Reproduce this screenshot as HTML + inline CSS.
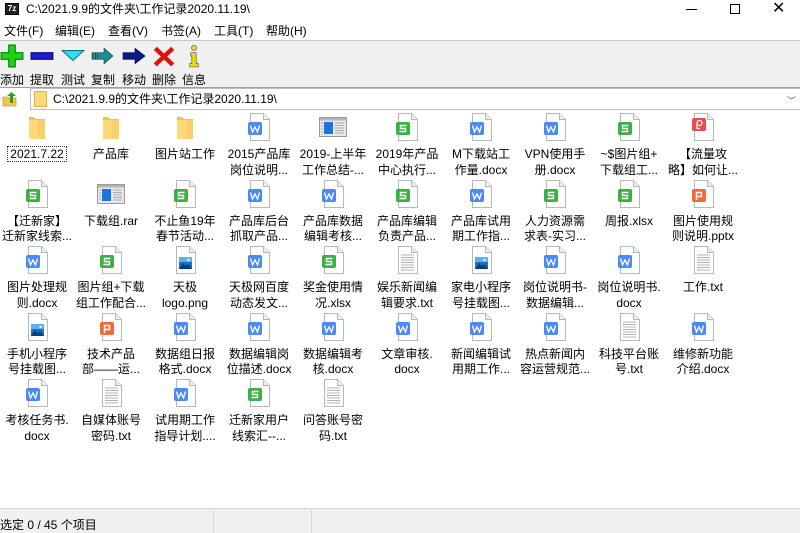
<!DOCTYPE html>
<html><head><meta charset="utf-8"><style>
*{margin:0;padding:0;box-sizing:border-box}
body{width:800px;height:533px;overflow:hidden;background:#fff;font-family:"Liberation Sans","Noto Sans CJK SC",sans-serif;font-size:12px;color:#000;position:relative}
.abs{position:absolute;white-space:nowrap}
.cell{position:absolute;width:74px;text-align:center}
.cell svg{display:block;margin:0 auto}
.cell .t{margin-top:6px;line-height:15.5px;white-space:nowrap;font-size:12px}
.tb{position:absolute;top:44px;width:36px;text-align:center}
.tb svg{display:block;margin:0 auto}
.tb span{display:block;font-size:12px;margin-top:3px;white-space:nowrap}
.menu span{position:absolute;white-space:nowrap}
</style></head><body>
<svg width="0" height="0" style="position:absolute">
<defs>
<symbol id="doc" viewBox="0 0 24 28"><path d="M3.5 .5H16.5L22.5 6.5V27.5H3.5Z" fill="#fff" stroke="#b8b8b8"/><path d="M16.5 .5V6.5H22.5" fill="#eee" stroke="#b8b8b8"/></symbol>
<symbol id="w" viewBox="0 0 24 28"><use href="#doc"/><rect x="1" y="9" width="14" height="13" rx="2" fill="#4a8af4"/><path d="M3.5 12.5L5.5 19L8 14L10.5 19L12.5 12.5" fill="none" stroke="#fff" stroke-width="1.3"/></symbol>
<symbol id="s" viewBox="0 0 24 28"><use href="#doc"/><rect x="1" y="9" width="14" height="13" rx="2" fill="#3db043"/><path d="M11.5 12.5H5.5V15.5H10.5V18.5H4.5" fill="none" stroke="#fff" stroke-width="1.4"/></symbol>
<symbol id="p" viewBox="0 0 24 28"><use href="#doc"/><rect x="1" y="9" width="14" height="13" rx="2" fill="#f36a3a"/><path d="M5.5 20V12.5H10.5V16.5H5.5" fill="none" stroke="#fff" stroke-width="1.4"/></symbol>
<symbol id="pr" viewBox="0 0 24 28"><use href="#doc"/><rect x="1" y="5" width="14" height="13" rx="2" fill="#e84c4c"/><circle cx="8.5" cy="10" r="2.5" fill="none" stroke="#fff" stroke-width="1.2"/><path d="M6 10V15.5H9" fill="none" stroke="#fff" stroke-width="1.2"/></symbol>
<symbol id="txt" viewBox="0 0 24 28"><use href="#doc"/><path d="M6 9H19M6 11.5H19M6 14H19M6 16.5H19M6 19H19M6 21.5H19M6 24H19" stroke="#9a9a9a" stroke-width=".8"/></symbol>
<symbol id="img" viewBox="0 0 24 28"><use href="#doc"/><rect x="6" y="11" width="13" height="12" fill="#1f6fc1"/><rect x="6" y="11" width="13" height="5" fill="#5bb0ee"/><path d="M6 23L10 17L13 20L15 18L19 23Z" fill="#0a3e7a"/><circle cx="15.5" cy="14" r="1.2" fill="#fff"/></symbol>
<symbol id="rar" viewBox="0 0 30 28"><rect x="1.5" y="4.5" width="27" height="19" fill="#e8e8e8" stroke="#9a9a9a"/><rect x="2" y="5" width="26" height="2.5" fill="#b5b5b5"/><rect x="6" y="9" width="9" height="12" fill="#1677e0"/><path d="M17 10H26M17 12.5H26M17 15H26M17 17.5H26M17 20H26M3 10H5M3 13H5M3 16H5M3 19H5" stroke="#999" stroke-width=".8"/></symbol>
<symbol id="fold" viewBox="0 0 24 28"><path d="M4 4H9L11 6H20V26H4Z" fill="#e9c25a"/><path d="M4 7H20V26H4Z" fill="#ffd978"/><path d="M13 7H20V26H13Z" fill="#f8cf68"/></symbol>
</defs></svg>

<div class="abs" style="left:5px;top:3px;width:14px;height:12px;background:#222;border:1px solid #000"><div style="color:#fff;font-size:8px;line-height:10px;font-weight:bold;text-align:center">7z</div></div>
<div class="abs" style="left:26px;top:1px;font-size:12px;line-height:16px">C:\2021.9.9的文件夹\工作记录2020.11.19\</div>
<div class="abs" style="left:686px;top:9px;width:11px;height:1px;background:#000"></div>
<div class="abs" style="left:730px;top:4px;width:10px;height:10px;border:1px solid #000"></div>
<div class="abs" style="left:772px;top:0;font-size:16px;line-height:18px;font-weight:200">✕</div>
<div class="abs menu" style="left:4px;top:23px;line-height:16px">
<span style="left:0">文件(F)</span><span style="left:51px">编辑(E)</span><span style="left:104px">查看(V)</span><span style="left:157px">书签(A)</span><span style="left:210px">工具(T)</span><span style="left:262px">帮助(H)</span></div>
<div class="abs" style="left:0;top:40px;width:800px;height:48px;background:#f0f0f0;border-top:1px solid #c8c8c8;border-bottom:1px solid #a0a0a0"></div>
<div class="tb" style="left:-6px"><svg width="24" height="24" viewBox="0 0 22 22"><path d="M8 1H14V8H21V14H14V21H8V14H1V8H8Z" fill="#17d517" stroke="#0a7a0a"/></svg><span>添加</span></div>
<div class="tb" style="left:24px"><svg width="24" height="24" viewBox="0 0 22 22"><rect x="1" y="8" width="20" height="6" fill="#1c1cd8" stroke="#06066a"/></svg><span>提取</span></div>
<div class="tb" style="left:55px"><svg width="24" height="24" viewBox="0 0 22 22"><path d="M1 6H21L11 15Z" fill="#30e0f0" stroke="#077a8a"/></svg><span>测试</span></div>
<div class="tb" style="left:85px"><svg width="24" height="24" viewBox="0 0 22 22"><path d="M1 8H3V14H1ZM4 8H6V14H4ZM7 8H12V4L20 11L12 18V14H7Z" fill="#1a9090" stroke="#0a4a4a" stroke-width=".7"/></svg><span>复制</span></div>
<div class="tb" style="left:116px"><svg width="24" height="24" viewBox="0 0 22 22"><path d="M1 8H12V4L21 11L12 18V14H1Z" fill="#0b1a8a" stroke="#000040" stroke-width=".7"/></svg><span>移动</span></div>
<div class="tb" style="left:146px"><svg width="24" height="24" viewBox="0 0 22 22"><path d="M3 4L19 19M19 4L3 19" stroke="#e01010" stroke-width="4"/></svg><span>删除</span></div>
<div class="tb" style="left:176px"><svg width="24" height="24" viewBox="0 0 22 22"><circle cx="11" cy="3.5" r="2.3" fill="#e8e000" stroke="#555" stroke-width=".6"/><path d="M8 8H13V18H15V21H7V18H9V11H8Z" fill="#e8e000" stroke="#555" stroke-width=".6"/></svg><span>信息</span></div>
<div class="abs" style="left:2px;top:91px"><svg width="16" height="16" viewBox="0 0 16 16"><path d="M1 6H6L7 7H14V15H1Z" fill="#f0c850" stroke="#b08820" stroke-width=".6"/><path d="M8 12V5H5L9.5 1L14 5H11V12Z" fill="#2aa02a"/></svg></div>
<div class="abs" style="left:30px;top:88px;width:770px;height:22px;border:1px solid #bdbdbd;border-right:none;background:#fff"></div>
<div class="abs" style="left:34px;top:91px;width:13px;height:16px;background:#ffd978;border:1px solid #e0b040"></div>
<div class="abs" style="left:53px;top:91px;line-height:16px">C:\2021.9.9的文件夹\工作记录2020.11.19\</div>
<div class="abs" style="left:787px;top:94px;font-size:9px;color:#555">﹀</div>

<div id="grid"></div>

<div class="abs" style="left:0;top:508px;width:800px;height:25px;background:#f0f0f0;border-top:1px solid #d0d0d0"></div>
<div class="abs" style="left:213px;top:510px;width:1px;height:23px;background:#d8d8d8"></div>
<div class="abs" style="left:311px;top:510px;width:1px;height:23px;background:#d8d8d8"></div>
<div class="abs" style="left:0;top:517px;line-height:16px">选定 0 / 45 个项目</div>

<script>
var rows=[
[["fold","2021.7.22"],["fold","产品库"],["fold","图片站工作"],["w","2015产品库","岗位说明..."],["rar","2019-上半年","工作总结-..."],["s","2019年产品","中心执行..."],["w","M下载站工","作量.docx"],["w","VPN使用手","册.docx"],["s","~$图片组+","下载组工..."],["pr","【流量攻","略】如何让..."]],
[["s","【迁新家】","迁新家线索..."],["rar","下载组.rar"],["s","不止鱼19年","春节活动..."],["w","产品库后台","抓取产品..."],["w","产品库数据","编辑考核..."],["s","产品库编辑","负责产品..."],["w","产品库试用","期工作指..."],["s","人力资源需","求表-实习..."],["s","周报.xlsx"],["p","图片使用规","则说明.pptx"]],
[["w","图片处理规","则.docx"],["s","图片组+下载","组工作配合..."],["img","天极","logo.png"],["w","天极网百度","动态发文..."],["s","奖金使用情","况.xlsx"],["txt","娱乐新闻编","辑要求.txt"],["img","家电小程序","号挂载图..."],["w","岗位说明书-","数据编辑..."],["w","岗位说明书.","docx"],["txt","工作.txt"]],
[["img","手机小程序","号挂载图..."],["p","技术产品","部——运..."],["w","数据组日报","格式.docx"],["w","数据编辑岗","位描述.docx"],["w","数据编辑考","核.docx"],["w","文章审核.","docx"],["w","新闻编辑试","用期工作..."],["w","热点新闻内","容运营规范..."],["txt","科技平台账","号.txt"],["w","维修新功能","介绍.docx"]],
[["w","考核任务书.","docx"],["txt","自媒体账号","密码.txt"],["w","试用期工作","指导计划...."],["s","迁新家用户","线索汇--..."],["txt","问答账号密","码.txt"]]];
var h="";
rows.forEach(function(r,ri){r.forEach(function(c,ci){
var x=ci*74,y=113+ri*66.5;var wd=c[0]=="rar"?30:24;
var txt=c.slice(1).join("<br>");
if(ri==0&&ci==0)txt='<span style="outline:1px dotted #333;padding:0 2px">'+txt+'</span>';
h+='<div class="cell" style="left:'+x+'px;top:'+y+'px"><svg width="'+wd+'" height="28"><use href="#'+c[0]+'"/></svg><div class="t">'+txt+'</div></div>';
});});
document.getElementById("grid").innerHTML=h;
</script>
</body></html>
